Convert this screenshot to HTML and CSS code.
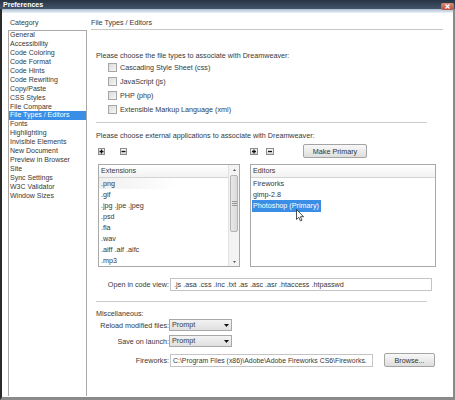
FILE: index.html
```html
<!DOCTYPE html>
<html>
<head>
<meta charset="utf-8">
<link rel="stylesheet" href="styles.css">
</head>
<body>
<div class="window">
  <div class="titlebar">
    <span class="title">Preferences</span>
    <span class="close"><svg width="13" height="7" viewBox="0 0 13 7"><path d="M4.5 1.5l4 4M8.5 1.5l-4 4" stroke="#fff" stroke-width="1.2"/></svg></span>
  </div>
  <div class="band"></div>
  <div class="content">
    <div class="left">
      <div class="cat-label">Category</div>
      <ul class="cat-list">
        <li>General</li>
        <li>Accessibility</li>
        <li>Code Coloring</li>
        <li>Code Format</li>
        <li>Code Hints</li>
        <li>Code Rewriting</li>
        <li>Copy/Paste</li>
        <li>CSS Styles</li>
        <li>File Compare</li>
        <li class="sel">File Types / Editors</li>
        <li>Fonts</li>
        <li>Highlighting</li>
        <li>Invisible Elements</li>
        <li>New Document</li>
        <li>Preview in Browser</li>
        <li>Site</li>
        <li>Sync Settings</li>
        <li>W3C Validator</li>
        <li>Window Sizes</li>
      </ul>
    </div>
    <div class="right">
      <div class="panel-title">File Types / Editors</div>
      <div class="section">
        <div class="prompt1">Please choose the file types to associate with Dreamweaver:</div>
        <div class="chk-row"><span class="chk"></span><span class="chk-label">Cascading Style Sheet (css)</span></div>
        <div class="chk-row"><span class="chk"></span><span class="chk-label">JavaScript (js)</span></div>
        <div class="chk-row"><span class="chk"></span><span class="chk-label">PHP (php)</span></div>
        <div class="chk-row"><span class="chk"></span><span class="chk-label">Extensible Markup Language (xml)</span></div>
        <div class="sep sep1"></div>
        <div class="prompt2">Please choose external applications to associate with Dreamweaver:</div>
        <div class="apps">
          <div class="col-ext">
            <div class="btn-row">
              <span class="mini"><svg width="7" height="7" viewBox="0 0 7 7"><path d="M3.5 1.5v4M1.5 3.5h4" stroke="#111" stroke-width="1.3"/></svg></span>
              <span class="mini mini-minus"><svg width="7" height="7" viewBox="0 0 7 7"><path d="M1.5 3.5h4" stroke="#111" stroke-width="1.3"/></svg></span>
            </div>
            <div class="list ext-list">
              <div class="list-main">
                <div class="list-head">Extensions</div>
                <div class="row hover">.png</div>
                <div class="row">.gif</div>
                <div class="row">.jpg .jpe .jpeg</div>
                <div class="row">.psd</div>
                <div class="row">.fla</div>
                <div class="row">.wav</div>
                <div class="row">.aiff .aif .aifc</div>
                <div class="row">.mp3</div>
              </div>
              <div class="scrollbar">
                <div class="arrow"><svg width="9" height="8" viewBox="0 0 9 8"><path d="M3 5h3L4.5 3z" fill="#555"/></svg></div>
                <div class="track">
                  <div class="thumb"><svg width="5" height="5" viewBox="0 0 5 5"><path d="M0 0.5h5M0 2.5h5M0 4.5h5" stroke="#999" stroke-width="1"/></svg></div>
                </div>
                <div class="arrow"><svg width="9" height="8" viewBox="0 0 9 8"><path d="M3 3h3L4.5 5z" fill="#555"/></svg></div>
              </div>
            </div>
          </div>
          <div class="col-ed">
            <div class="btn-row">
              <span class="mini mini-wide"><svg width="8" height="7" viewBox="0 0 8 7"><path d="M4 1.5v4M2 3.5h4" stroke="#111" stroke-width="1.3"/></svg></span>
              <span class="mini mini-wide mini-minus2"><svg width="8" height="7" viewBox="0 0 8 7"><path d="M2 3.5h4" stroke="#111" stroke-width="1.3"/></svg></span>
              <span class="btn make-primary">Make Primary</span>
            </div>
            <div class="list ed-list">
              <div class="list-main">
                <div class="list-head">Editors</div>
                <div class="row">Fireworks</div>
                <div class="row">gimp-2.8</div>
                <div class="row"><span class="sel-text">Photoshop (Primary)</span></div>
              </div>
            </div>
          </div>
        </div>
        <div class="field-row code-row">
          <span class="flabel">Open in code view:</span>
          <span class="input code-input">.js .asa .css .inc .txt .as .asc .asr .htaccess .htpasswd</span>
        </div>
        <div class="sep sep2"></div>
        <div class="misc">Miscellaneous:</div>
        <div class="field-row sel-row reload-row">
          <span class="flabel">Reload modified files:</span>
          <span class="select">Prompt<svg class="caret" width="5" height="3" viewBox="0 0 5 3"><path d="M0 0h5L2.5 3z" fill="#111"/></svg></span>
        </div>
        <div class="field-row sel-row save-row">
          <span class="flabel">Save on launch:</span>
          <span class="select">Prompt<svg class="caret" width="5" height="3" viewBox="0 0 5 3"><path d="M0 0h5L2.5 3z" fill="#111"/></svg></span>
        </div>
        <div class="field-row fw-row">
          <span class="flabel">Fireworks:</span>
          <span class="input fw-input">C:\Program Files (x86)\Adobe\Adobe Fireworks CS6\Fireworks.</span>
          <span class="btn browse">Browse...</span>
        </div>
      </div>
    </div>
  </div>
  <svg class="cursor" width="9" height="13" viewBox="0 0 9 13"><path d="M0.5 0.5v10l2.3-2.2 1.6 3.6 1.6-0.7-1.6-3.5h3.2z" fill="#fff" stroke="#222" stroke-width="0.8" stroke-linejoin="round"/></svg>
</div>
</body>
</html>
```
FILE: styles.css
```css
html, body {
  margin: 0;
  padding: 0;
}
body {
  width: 455px;
  height: 400px;
  overflow: hidden;
  background: #fff;
  font-family: "Liberation Sans", Arial, sans-serif;
  font-size: 7px;
  color: #383838;
}
.window {
  position: relative;
  width: 455px;
  height: 400px;
  box-sizing: border-box;
  border-left: 2px solid #2a2a2a;
  border-right: 2px solid #8a8a8a;
  border-bottom: 3px solid #8a8a8a;
  background: #fff;
}
.titlebar {
  height: 9px;
  margin-left: -2px;
  margin-right: -2px;
  background: linear-gradient(#263444, #44546a);
  display: flex;
  align-items: center;
  justify-content: space-between;
}
.title {
  color: #fff;
  font-weight: bold;
  font-size: 7px;
  line-height: 9px;
  padding-left: 3px;
}
.close {
  width: 13px;
  height: 7px;
  margin-right: 1px;
  margin-top: 3px;
  background: linear-gradient(#d98a78, #b9523c);
  border-radius: 2px;
  display: flex;
}
.band {
  height: 4px;
  background: linear-gradient(#a9bdd2, #eef2f7);
}
.content {
  display: flex;
}
.left {
  width: 79px;
  margin-left: 6px;
}
.cat-label {
  line-height: 9px;
  margin-top: 5px;
  height: 12px;
  padding-left: 2px;
}
.cat-list {
  list-style: none;
  margin: 0;
  padding: 0;
  height: 366px;
  box-sizing: border-box;
  border: 1px solid #a8a8a8;
  border-bottom: none;
}
.cat-list li {
  line-height: 8.95px;
  height: 8.95px;
  padding-left: 1px;
  white-space: nowrap;
}
.cat-list li.sel {
  background: #3a8ee6;
  color: #fff;
}
.right {
  width: 352px;
  margin-left: 4px;
  font-size: 7.2px;
}
.panel-title {
  padding-top: 5px;
  padding-bottom: 2px;
  line-height: 9px;
  border-bottom: 1px solid #c8c8c8;
}
.section {
  padding-left: 5px;
}
.prompt1 {
  margin-top: 21px;
  line-height: 9px;
}
.chk-row {
  height: 14px;
  display: flex;
  align-items: center;
}
.chk {
  width: 7px;
  height: 7px;
  margin-left: 12px;
  border: 1px solid #a6a6a6;
  background: linear-gradient(135deg, #dcdcdc, #f6f6f6);
}
.chk-label {
  margin-left: 3px;
  line-height: 9px;
}
.sep {
  height: 1px;
  width: 331px;
  background: #cacaca;
}
.sep1 {
  margin-top: 6px;
}
.prompt2 {
  margin-top: 8px;
  line-height: 9px;
}
.apps {
  display: flex;
  margin-top: 4px;
}
.col-ext {
  width: 142px;
  margin-left: 2px;
}
.col-ed {
  width: 186px;
  margin-left: 10px;
}
.btn-row {
  height: 14px;
  display: flex;
  align-items: center;
}
.mini {
  width: 7px;
  height: 7px;
  box-sizing: border-box;
  border: 1px solid #8c8c8c;
  background: linear-gradient(#fafafa, #d8d8d8);
  display: flex;
}
.mini svg {
  margin: -1px;
}
.mini-minus {
  margin-left: 15px;
}
.mini-wide {
  width: 8px;
}
.mini-minus2 {
  margin-left: 8px;
}
.btn {
  box-sizing: border-box;
  height: 14px;
  border: 1px solid #a4a4a4;
  border-radius: 2px;
  background: linear-gradient(#f8f8f8, #dedede);
  display: flex;
  align-items: center;
  justify-content: center;
  line-height: 9px;
  color: #333;
}
.make-primary {
  width: 64px;
  margin-left: 29px;
}
.list {
  margin-top: 6px;
  height: 103px;
  box-sizing: border-box;
  border: 1px solid #a8a8a8;
  background: #fff;
  display: flex;
}
.list-main {
  flex: 1;
}
.list-head {
  height: 12px;
  line-height: 12px;
  padding-left: 2px;
  border-bottom: 1px solid #d4d4d4;
  background: linear-gradient(#fff, #f2f2f2);
}
.row {
  height: 11px;
  line-height: 11px;
  padding-left: 2px;
  white-space: nowrap;
}
.row.hover {
  background: linear-gradient(90deg, #f0f0f0, #fff 60%);
}
.sel-text {
  display: inline-block;
  background: #3a8ee6;
  color: #fff;
  line-height: 12px;
  padding-right: 2px;
  margin-left: -1px;
  padding-left: 1px;
}
.scrollbar {
  width: 10px;
  border-left: 1px solid #e2e2e2;
  background: #f3f3f3;
  display: flex;
  flex-direction: column;
}
.arrow {
  height: 9px;
  display: flex;
  align-items: center;
  justify-content: center;
}
.track {
  flex: 1;
  padding-top: 1px;
}
.thumb {
  height: 57px;
  margin: 0 1px;
  box-sizing: border-box;
  border: 1px solid #b4b4b4;
  border-radius: 2px;
  background: linear-gradient(90deg, #e8e8e8, #dadada);
  display: flex;
  align-items: center;
  justify-content: center;
}
.field-row {
  display: flex;
  align-items: center;
}
.flabel {
  width: 73px;
  text-align: right;
  white-space: nowrap;
  line-height: 9px;
}
.input {
  box-sizing: border-box;
  height: 13px;
  border: 1px solid #c4c4c4;
  background: #fff;
  line-height: 11px;
  padding-left: 3px;
  white-space: nowrap;
  overflow: hidden;
}
.code-row {
  margin-top: 10px;
  height: 14px;
}
.code-input {
  width: 262px;
  margin-left: 1px;
}
.sep2 {
  margin-top: 10px;
}
.misc {
  margin-top: 7px;
  line-height: 9px;
}
.sel-row {
  height: 12px;
}
.reload-row {
  margin-top: 1px;
}
.save-row {
  margin-top: 4px;
}
.select {
  box-sizing: border-box;
  width: 63px;
  height: 12px;
  border: 1px solid #a8a8a8;
  background: linear-gradient(#f2f2f2, #e0e0e0);
  line-height: 10px;
  padding-left: 2px;
  display: flex;
  align-items: center;
  justify-content: space-between;
  padding-right: 2px;
}
.fw-row {
  margin-top: 6px;
  height: 14px;
}
.fw-input {
  width: 203px;
  margin-left: 1px;
  font-size: 6.9px;
  padding-left: 2px;
}
.browse {
  width: 51px;
  margin-left: 11px;
}
.cursor {
  position: absolute;
  left: 294px;
  top: 209px;
}
```
